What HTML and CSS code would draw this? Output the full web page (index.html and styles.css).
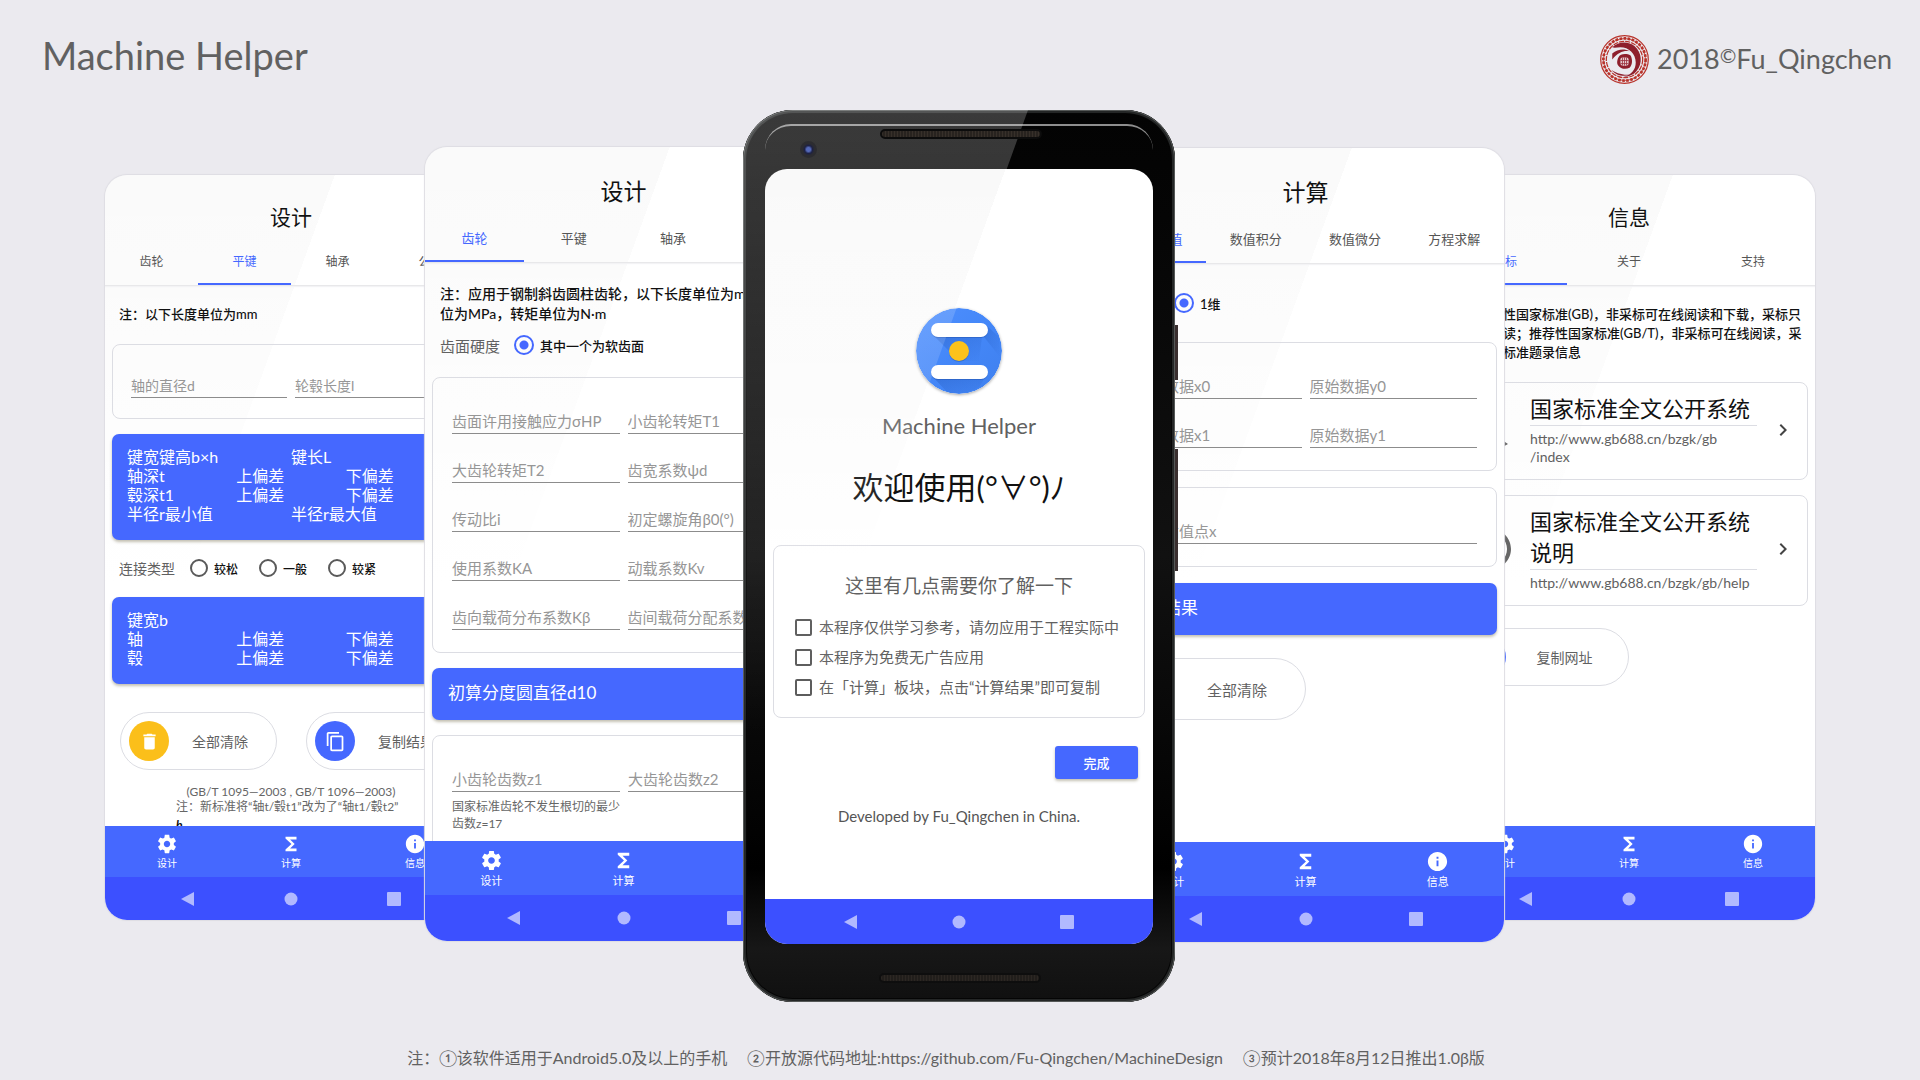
FILE: index.html
```html
<!DOCTYPE html>
<html lang="zh-CN">
<head>
<meta charset="utf-8">
<meta name="viewport" content="width=device-width, initial-scale=1">
<title>Machine Helper</title>
<link rel="stylesheet" href="styles.css">
</head>
<body>
<svg class="sprite" aria-hidden="true">
  <symbol id="gear" viewBox="0 0 24 24"><path d="M19.43 12.98c.04-.32.07-.64.07-.98s-.03-.66-.07-.98l2.11-1.65c.19-.15.24-.42.12-.64l-2-3.46c-.12-.22-.39-.3-.61-.22l-2.49 1c-.52-.4-1.08-.73-1.69-.98l-.38-2.65C14.46 2.18 14.25 2 14 2h-4c-.25 0-.46.18-.49.42l-.38 2.65c-.61.25-1.17.59-1.69.98l-2.49-1c-.23-.09-.49 0-.61.22l-2 3.46c-.13.22-.07.49.12.64l2.11 1.65c-.04.32-.07.65-.07.98s.03.66.07.98l-2.11 1.65c-.19.15-.24.42-.12.64l2 3.46c.12.22.39.3.61.22l2.49-1c.52.4 1.08.73 1.69.98l.38 2.65c.03.24.24.42.49.42h4c.25 0 .46-.18.49-.42l.38-2.65c.61-.25 1.17-.59 1.69-.98l2.49 1c.23.09.49 0 .61-.22l2-3.46c.12-.22.07-.49-.12-.64l-2.11-1.65zM12 15.5c-1.93 0-3.5-1.57-3.5-3.5s1.57-3.5 3.5-3.5 3.5 1.57 3.5 3.5-1.57 3.5-3.5 3.5z"/></symbol>
  <symbol id="sigma" viewBox="0 0 24 24"><path d="M18 4H6v2l6.5 6L6 18v2h12v-3h-7l5-5-5-5h7z"/></symbol>
  <symbol id="info" viewBox="0 0 24 24"><path d="M12 2C6.48 2 2 6.48 2 12s4.48 10 10 10 10-4.48 10-10S17.52 2 12 2zm1 15h-2v-6h2v6zm0-8h-2V7h2v2z"/></symbol>
  <symbol id="trash" viewBox="0 0 24 24"><path d="M6 19c0 1.1.9 2 2 2h8c1.1 0 2-.9 2-2V7H6v12zM19 4h-3.5l-1-1h-5l-1 1H5v2h14V4z"/></symbol>
  <symbol id="copy" viewBox="0 0 24 24"><path d="M16 1H4c-1.1 0-2 .9-2 2v14h2V3h12V1zm3 4H8c-1.1 0-2 .9-2 2v14c0 1.1.9 2 2 2h11c1.1 0 2-.9 2-2V7c0-1.1-.9-2-2-2zm0 16H8V7h11v14z"/></symbol>
  <symbol id="chevron" viewBox="0 0 24 24"><path d="M10 6L8.590 7.410 13.170 12l-4.580 4.590L10 18l6-6z"/></symbol>
  <symbol id="ring" viewBox="0 0 24 24"><path d="M11 18h2v-2h-2v2zm1-16C6.480 2 2 6.480 2 12s4.480 10 10 10 10-4.480 10-10S17.520 2 12 2zm0 18c-4.410 0-8-3.590-8-8s3.590-8 8-8 8 3.590 8 8-3.590 8-8 8zm0-14c-2.210 0-4 1.790-4 4h2c0-1.100.9-2 2-2s2 .9 2 2c0 2-3 1.750-3 5h2c0-2.250 3-2.500 3-5 0-2.210-1.790-4-4-4z"/></symbol>
  <symbol id="goto" viewBox="0 0 24 24"><path d="M3 4h14v9h-2V6H5v12h8v2H3zM16 16v2h-4v2h4v1.500l4.500-2.500-4.500-3z"/></symbol>
  <symbol id="back" viewBox="0 0 14 14"><path d="M13 0v14L0 7z"/></symbol>
  <symbol id="home" viewBox="0 0 14 14"><circle cx="7" cy="7" r="6.500"/></symbol>
  <symbol id="recent" viewBox="0 0 14 14"><rect width="14" height="14" rx="1"/></symbol>
</svg>

<header class="page-header">
  <h1 class="brand">Machine Helper</h1>
  <p class="author">
    <svg class="seal" viewBox="0 0 48 48" aria-hidden="true">
      <circle cx="24" cy="24" r="23.300" fill="none" stroke="#b8322a" stroke-width="1.200"/>
      <circle cx="24" cy="24" r="20.700" fill="none" stroke="#b8322a" stroke-width="2.600" stroke-dasharray="2.600 1.400"/>
      <circle cx="24" cy="24" r="20.500" fill="none" stroke="#b8322a" stroke-width=".8"/>
      <circle cx="24" cy="24" r="17.800" fill="none" stroke="#b8322a" stroke-width="1.200" stroke-dasharray="5 1"/>
      <path d="M12 12C18 6 28 6 34 11c7 6 8 17 2 24-3 4-8 6-13 6 8-2 12-7 12-14 0-9-7-15-15-15-3 0-6 1-8 0z" fill="#8e1f2c"/>
      <path d="M11 34c5 6 12 7 18 5-7 0-12-1-18-5zM12 18c5-4 12-5 17-2-6-1-11 1-17 8z" fill="#8e1f2c"/>
      <path d="M18 22c2-4 8-4 12-2 2 4 2 9-1 12-4 2-9 1-11-2-2-2-1-6 0-8z" fill="#8e1f2c"/>
      <rect x="20" y="22" width="8" height="8" rx="2" fill="#e6cfd2"/>
      <path d="M22 22v8M24 22v8M26 22v8M20 25h8M20 28h8" stroke="#9c3440" stroke-width=".8"/>
    </svg>
    <span>2018<span class="copyright">©</span>Fu_Qingchen</span>
  </p>
</header>

<main class="stage">
  <section class="screen screen--small" aria-label="平键设计">
    <h2 class="screen-title">设计</h2>
    <nav class="tabs">
      <button type="button" class="tab">齿轮</button>
      <button type="button" class="tab tab--active">平键</button>
      <button type="button" class="tab">轴承</button>
      <button type="button" class="tab">公差</button>
    </nav>
    <div class="content">
      <p class="note">注：以下长度单位为mm</p>
      <div class="card fields">
        <input class="field" aria-label="轴的直径d" placeholder="轴的直径d">
        <input class="field" aria-label="轮毂长度l" placeholder="轮毂长度l">
      </div>
      <div class="result">
        <div class="halves"><span>键宽键高b×h</span><span>键长L</span></div>
        <div class="thirds"><span>轴深t</span><span>上偏差</span><span>下偏差</span></div>
        <div class="thirds"><span>毂深t1</span><span>上偏差</span><span>下偏差</span></div>
        <div class="halves"><span>半径r最小值</span><span>半径r最大值</span></div>
      </div>
      <div class="choices choices--spread" role="radiogroup" aria-label="连接类型">
        <span class="choices-label">连接类型</span>
        <label class="choice"><input type="radio" name="fit">较松</label>
        <label class="choice"><input type="radio" name="fit">一般</label>
        <label class="choice"><input type="radio" name="fit">较紧</label>
      </div>
      <div class="result">
        <div>键宽b</div>
        <div class="thirds"><span>轴</span><span>上偏差</span><span>下偏差</span></div>
        <div class="thirds"><span>毂</span><span>上偏差</span><span>下偏差</span></div>
      </div>
      <div class="actions actions--pair">
        <button type="button" class="pill"><span class="pill-icon pill-icon--yellow"><svg><use href="#trash"/></svg></span><span class="pill-text">全部清除</span></button>
        <button type="button" class="pill"><span class="pill-icon"><svg><use href="#copy"/></svg></span><span class="pill-text">复制结果</span></button>
      </div>
      <div class="remark">
        <p class="remark-code">(GB/T 1095—2003 , GB/T 1096—2003)</p>
        <p>注：新标准将“轴t/毂t1”改为了“轴t1/毂t2”</p>
        <p class="remark-symbol">b</p>
      </div>
    </div>
    <nav class="bottom-nav">
      <a href="#design"><svg><use href="#gear"/></svg>设计</a>
      <a href="#calc"><svg><use href="#sigma"/></svg>计算</a>
      <a href="#about"><svg><use href="#info"/></svg>信息</a>
    </nav>
    <div class="system-bar"><svg><use href="#back"/></svg><svg><use href="#home"/></svg><svg><use href="#recent"/></svg></div>
  </section>

  <section class="screen screen--gears" aria-label="齿轮设计">
    <h2 class="screen-title">设计</h2>
    <nav class="tabs">
      <button type="button" class="tab tab--active">齿轮</button>
      <button type="button" class="tab">平键</button>
      <button type="button" class="tab">轴承</button>
      <button type="button" class="tab">公差</button>
    </nav>
    <div class="content">
      <p class="note">注：应用于钢制斜齿圆柱齿轮，以下长度单位为mm<br>位为MPa，转矩单位为N·m</p>
      <div class="choices choices--tight" role="radiogroup" aria-label="齿面硬度">
        <span class="choices-label">齿面硬度</span>
        <label class="choice"><input type="radio" name="hardness" checked>其中一个为软齿面</label>
      </div>
      <div class="card fields">
        <input class="field" aria-label="齿面许用接触应力σHP" placeholder="齿面许用接触应力σHP">
        <input class="field" aria-label="小齿轮转矩T1" placeholder="小齿轮转矩T1">
        <input class="field" aria-label="大齿轮转矩T2" placeholder="大齿轮转矩T2">
        <input class="field" aria-label="齿宽系数ψd" placeholder="齿宽系数ψd">
        <input class="field" aria-label="传动比i" placeholder="传动比i">
        <input class="field" aria-label="初定螺旋角β0(°)" placeholder="初定螺旋角β0(°)">
        <input class="field" aria-label="使用系数KA" placeholder="使用系数KA">
        <input class="field" aria-label="动载系数Kv" placeholder="动载系数Kv">
        <input class="field" aria-label="齿向载荷分布系数Kβ" placeholder="齿向载荷分布系数Kβ">
        <input class="field" aria-label="齿间载荷分配系数Kα" placeholder="齿间载荷分配系数Kα">
      </div>
      <div class="result result--single">初算分度圆直径d10</div>
      <div class="card fields">
        <div>
          <input class="field" aria-label="小齿轮齿数z1" placeholder="小齿轮齿数z1">
          <p class="hint">国家标准齿轮不发生根切的最少<br>齿数z=17</p>
        </div>
        <input class="field" aria-label="大齿轮齿数z2" placeholder="大齿轮齿数z2">
      </div>
    </div>
    <nav class="bottom-nav">
      <a href="#design"><svg><use href="#gear"/></svg>设计</a>
      <a href="#calc"><svg><use href="#sigma"/></svg>计算</a>
      <a href="#about"><svg><use href="#info"/></svg>信息</a>
    </nav>
    <div class="system-bar"><svg><use href="#back"/></svg><svg><use href="#home"/></svg><svg><use href="#recent"/></svg></div>
  </section>

  <section class="phone" aria-label="欢迎使用">
    <span class="sheen"></span>
    <span class="camera"></span>
    <span class="speaker"></span>
    <div class="display">
      <div class="welcome">
        <svg class="logo" viewBox="0 0 86 86" aria-hidden="true">
          <defs>
            <linearGradient id="disc" x1="0" y1="0" x2="1" y2="1"><stop offset="0" stop-color="#4f90ff"/><stop offset=".5" stop-color="#4487f8"/><stop offset="1" stop-color="#3f80ee"/></linearGradient>
            <linearGradient id="shade" x1="0" y1="0" x2="1" y2="1"><stop offset="0" stop-color="#1c4fae" stop-opacity=".6"/><stop offset="1" stop-color="#1c4fae" stop-opacity="0"/></linearGradient>
          </defs>
          <circle cx="43" cy="43" r="43" fill="url(#disc)"/>
          <path d="M18 28l17 17 8 8 20 0L66 29z" fill="url(#shade)" opacity=".6"/>
          <path d="M70 17l13 12 1 20-16-20z" fill="url(#shade)" opacity=".5"/>
          <path d="M17 69l14 15c10 3 24 1 33-6l4-7z" fill="url(#shade)" opacity=".6"/>
          <rect x="15" y="16" width="57" height="14" rx="7" fill="#1d4ea8" opacity=".4"/>
          <rect x="15" y="58" width="57" height="14" rx="7" fill="#1d4ea8" opacity=".4"/>
          <rect x="15" y="15" width="57" height="14" rx="7" fill="#fff"/>
          <rect x="15" y="57" width="57" height="14" rx="7" fill="#fff"/>
          <circle cx="43" cy="44" r="10" fill="#1d4ea8" opacity=".4"/>
          <circle cx="43" cy="43" r="10" fill="#fcc21b"/>
        </svg>
        <p class="app-name">Machine Helper</p>
        <h2 class="greeting">欢迎使用(°∀°)ﾉ</h2>
        <form class="card terms">
          <h3>这里有几点需要你了解一下</h3>
          <label><input type="checkbox">本程序仅供学习参考，请勿应用于工程实际中</label>
          <label><input type="checkbox">本程序为免费无广告应用</label>
          <label><input type="checkbox">在「计算」板块，点击“计算结果”即可复制</label>
        </form>
        <button type="button" class="done">完成</button>
        <p class="credit">Developed by Fu_Qingchen in China.</p>
      </div>
      <div class="system-bar"><svg><use href="#back"/></svg><svg><use href="#home"/></svg><svg><use href="#recent"/></svg></div>
    </div>
    <span class="speaker speaker--bottom"></span>
  </section>

  <section class="screen screen--calc" aria-label="计算">
    <h2 class="screen-title">计算</h2>
    <nav class="tabs">
      <button type="button" class="tab tab--active">数据插值</button>
      <button type="button" class="tab">数值积分</button>
      <button type="button" class="tab">数值微分</button>
      <button type="button" class="tab">方程求解</button>
    </nav>
    <div class="content">
      <div class="choices choices--loose" role="radiogroup" aria-label="维数">
        <span class="choices-label">维数</span>
        <label class="choice"><input type="radio" name="dimension" checked>1维</label>
      </div>
      <div class="card fields">
        <input class="field" aria-label="原始数据x0" placeholder="原始数据x0">
        <input class="field" aria-label="原始数据y0" placeholder="原始数据y0">
        <input class="field" aria-label="原始数据x1" placeholder="原始数据x1">
        <input class="field" aria-label="原始数据y1" placeholder="原始数据y1">
      </div>
      <div class="card fields fields--single">
        <input class="field" aria-label="待求插值点x" placeholder="待求插值点x">
      </div>
      <div class="result result--single">计算结果</div>
      <div class="actions">
        <button type="button" class="pill"><span class="pill-icon pill-icon--yellow"><svg><use href="#trash"/></svg></span><span class="pill-text">全部清除</span></button>
      </div>
    </div>
    <nav class="bottom-nav">
      <a href="#design"><svg><use href="#gear"/></svg>设计</a>
      <a href="#calc"><svg><use href="#sigma"/></svg>计算</a>
      <a href="#about"><svg><use href="#info"/></svg>信息</a>
    </nav>
    <div class="system-bar"><svg><use href="#back"/></svg><svg><use href="#home"/></svg><svg><use href="#recent"/></svg></div>
  </section>

  <section class="screen screen--small screen--info" aria-label="信息">
    <h2 class="screen-title">信息</h2>
    <nav class="tabs">
      <button type="button" class="tab tab--active">国标</button>
      <button type="button" class="tab">关于</button>
      <button type="button" class="tab">支持</button>
    </nav>
    <div class="content">
      <p class="note note--wide">注：强制性国家标准(GB)，非采标可在线阅读和下载，采标只<br>能在线阅读；推荐性国家标准(GB/T)，非采标可在线阅读，采<br>标只提供标准题录信息</p>
      <div class="card link-card">
        <svg class="link-icon"><use href="#goto"/></svg>
        <div class="link-body">
          <h3>国家标准全文公开系统</h3>
          <a href="http://www.gb688.cn/bzgk/gb/index">http://www.gb688.cn/bzgk/gb<br>/index</a>
        </div>
        <svg class="chevron"><use href="#chevron"/></svg>
      </div>
      <div class="card link-card">
        <svg class="link-icon"><use href="#ring"/></svg>
        <div class="link-body">
          <h3>国家标准全文公开系统说明</h3>
          <a href="http://www.gb688.cn/bzgk/gb/help">http://www.gb688.cn/bzgk/gb/help</a>
        </div>
        <svg class="chevron"><use href="#chevron"/></svg>
      </div>
      <div class="actions">
        <button type="button" class="pill"><span class="pill-icon"><svg><use href="#copy"/></svg></span><span class="pill-text">复制网址</span></button>
      </div>
    </div>
    <nav class="bottom-nav">
      <a href="#design"><svg><use href="#gear"/></svg>设计</a>
      <a href="#calc"><svg><use href="#sigma"/></svg>计算</a>
      <a href="#about"><svg><use href="#info"/></svg>信息</a>
    </nav>
    <div class="system-bar"><svg><use href="#back"/></svg><svg><use href="#home"/></svg><svg><use href="#recent"/></svg></div>
  </section>
</main>

<footer class="page-footer">
  <span>注：①该软件适用于Android5.0及以上的手机</span>
  <span>②开放源代码地址:https://github.com/Fu-Qingchen/MachineDesign</span>
  <span>③预计2018年8月12日推出1.0β版</span>
</footer>
</body>
</html>
```
FILE: styles.css
```css
:root {
  --blue: #4568ff;
  --blue-deep: #3c50ff;
  --line: #dcdde3;
  --text: #111;
  --muted: #616161;
}

* { box-sizing: border-box; }

body {
  margin: 0;
  min-height: 100vh;
  display: flex;
  flex-direction: column;
  background: #ebeaef;
  color: var(--text);
  font-family: Lato, "Noto Sans CJK SC", sans-serif;
  overflow-x: hidden;
}

h1, h2, h3, p { margin: 0; font-weight: 400; }
button, input { font: inherit; color: inherit; }
button { border: 0; padding: 0; background: none; cursor: pointer; }
a { color: inherit; text-decoration: none; }
svg { fill: currentColor; flex: none; }
.sprite { position: absolute; width: 0; height: 0; }

/* Page header and footer */
.page-header {
  display: flex;
  justify-content: space-between;
  align-items: center;
  height: 110px;
  padding: 0 28px 0 42px;
  color: var(--muted);
}
.brand { font-size: 38px; line-height: 48px; }
.author { display: flex; align-items: center; gap: 8px; padding-top: 8px; font-size: 27px; line-height: 34px; }
.seal { width: 49px; height: 49px; }
.author > span { padding-bottom: 4px; }
.copyright { font-size: 20px; vertical-align: 6px; }
.page-footer {
  display: flex;
  justify-content: center;
  gap: 20px;
  padding: 44px 28px 10px 0;
  font-size: 16px;
  line-height: 24px;
  color: var(--muted);
}

/* Overlapping row of screens */
.stage { display: flex; justify-content: center; align-items: flex-start; }

.screen {
  --title: 23px;  --title-line: 32px;  --title-top: 28px;
  --tab: 13px;    --tab-line: 20px;    --tab-pad: 21px 0 12px;
  --note: 14px;   --note-line: 20px;
  --field: 15px;  --field-height: 24px;
  --card-pad: 32px 19px 22px;
  --result: 17px; --result-line: 20px; --result-pad: 16px;
  --choice: 13px; --radio: 20px;
  --inset: 16px;
  --pill-width: 184px; --pill-height: 62px; --pill-icon: 43px;
  --nav: 11px;    --nav-height: 54px;  --nav-icon: 23px;
  --system-height: 46px; --system-gap: 96px;
  --sheen: 230px;
  position: relative;
  flex: none;
  display: flex;
  flex-direction: column;
  width: 397px;
  aspect-ratio: 397 / 794;
  overflow: hidden;
  border-radius: 22px;
  box-shadow: 0 0 1px 1px #dedde3;
  background:
    linear-gradient(to bottom, transparent, #fff 55%),
    linear-gradient(110deg, #fafafa var(--sheen), #fff var(--sheen));
  margin-top: 37px;
}
.screen--small {
  --title: 21px;  --title-line: 30px;  --title-top: 27px;
  --tab: 12px;    --tab-line: 18px;    --tab-pad: 21px 0 12px;
  --note: 13px;   --note-line: 19px;
  --field: 14px;  --field-height: 23px;
  --card-pad: 30px 18px 20px;
  --result: 16px; --result-line: 19px; --result-pad: 15px;
  --choice: 12px; --radio: 18px;
  --inset: 14px;
  --pill-width: 172px; --pill-height: 58px; --pill-icon: 40px;
  --nav: 10px;    --nav-height: 51px;  --nav-icon: 22px;
  --system-height: 43px; --system-gap: 89px;
  --sheen: 216px;
  width: 372px;
  aspect-ratio: 372 / 745;
  margin-top: 65px;
}
.screen--gears { margin-left: -52px; z-index: 1; }
.screen--calc { margin-left: -68px; margin-top: 38px; z-index: 1; }
.screen--info { margin-left: -61px; }

.screen-title {
  padding-top: var(--title-top);
  font-size: var(--title);
  line-height: var(--title-line);
  text-align: center;
}
.tabs { display: flex; border-bottom: 1px solid #e8e8ea; box-shadow: 0 1px 1px #f3f3f5; }
.tab {
  flex: 1;
  padding: var(--tab-pad);
  border-bottom: 2px solid transparent;
  font-size: var(--tab);
  line-height: var(--tab-line);
  color: #555;
}
.tab--active { color: var(--blue); border-color: var(--blue); }

.content { flex: 1; min-height: 0; overflow: hidden; padding: 0 7px; }
.note {
  padding: 21px 0 0 8px;
  font-size: var(--note);
  font-weight: 500;
  line-height: var(--note-line);
  white-space: nowrap;
}
.screen--small .note { padding: 19px 0 20px 7px; }
.screen--small .note--wide { padding-left: 1px; }

.card { border: 1px solid var(--line); border-radius: 8px; margin-bottom: 15px; }
.screen--calc .card { margin-bottom: 16px; }
.fields {
  display: grid;
  grid-template-columns: 1fr 1fr;
  align-items: start;
  gap: 25px 8px;
  padding: var(--card-pad);
}
.fields--single { grid-template-columns: 1fr; }
.field {
  display: block;
  width: 100%;
  min-width: 0;
  height: var(--field-height);
  padding: 0 0 2px;
  border: 0;
  border-bottom: 1px solid #8c8c8c;
  border-radius: 0;
  background: none;
  font-size: var(--field);
  outline: 0;
}
.field::placeholder { color: #969696; opacity: 1; }
.hint { margin-top: 6px; font-size: 12px; line-height: 17px; color: #666; white-space: nowrap; }

.result {
  padding: 13px var(--result-pad) 17px;
  border-radius: 7px;
  background: var(--blue);
  color: #fff;
  font-size: var(--result);
  line-height: var(--result-line);
  box-shadow: 0 2px 3px rgba(60, 50, 0, .3);
}
.result--single { padding-block: 15px 17px; margin-bottom: 15px; }
.halves { display: grid; grid-template-columns: 1fr 1fr; }
.thirds { display: grid; grid-template-columns: 1fr 1fr 1fr; }

.choices { display: flex; align-items: center; height: 24px; padding-left: 8px; gap: 14px; }
.choices--tight { margin: 9px 0 20px; }
.choices--loose { margin: 27px 0; }
.choices--spread { height: 22px; margin: 17px 0 18px; padding-left: 7px; gap: 21px; }
.choices--spread .choices-label { margin-right: -6px; }
.choices--loose .choices-label { min-width: 38px; }
.choices-label { font-size: var(--field); color: var(--muted); }
.choice { display: flex; align-items: center; gap: 6px; font-size: var(--choice); font-weight: 500; }
.choice input {
  appearance: none;
  width: var(--radio);
  height: var(--radio);
  margin: 0;
  border: 2px solid #5a5a5a;
  border-radius: 50%;
}
.choice input:checked {
  border-color: var(--blue);
  background: radial-gradient(circle, var(--blue) 0 4px, transparent 5px);
}

.actions { padding: 8px 0 0 8px; }
.actions--pair { display: grid; grid-template-columns: 157px 157px; gap: 29px; padding-top: 28px; }
.actions--pair .pill { width: auto; }
.pill {
  display: flex;
  align-items: center;
  width: var(--pill-width);
  height: var(--pill-height);
  padding: 0 5px 0 8px;
  border: 1px solid var(--line);
  border-radius: 31px;
  font-size: var(--field);
  color: var(--muted);
}
.pill-icon {
  display: grid;
  place-items: center;
  width: var(--pill-icon);
  height: var(--pill-icon);
  border-radius: 50%;
  background: var(--blue);
  color: #fff;
}
.pill-icon--yellow { background: #fbbf1a; }
.pill-icon svg { width: 21px; height: 21px; }
.pill-text { flex: 1; text-align: center; white-space: nowrap; }

.remark { width: 230px; margin: 14px auto 0; font-size: 12px; line-height: 15px; color: #666; white-space: nowrap; }
.remark-code { text-align: center; }
.remark-symbol { padding-top: 3px; font-style: italic; font-weight: 700; color: #111; }

.link-card { display: flex; align-items: center; padding: 10px 12px 13px 16px; }
.link-icon { width: 48px; height: 48px; color: #666; }
.link-body { width: 227px; margin: 0 auto 0 15px; }
.link-body h3 { padding-bottom: 1px; border-bottom: 1px solid var(--line); font-size: 22px; line-height: 31px; }
.link-body a { display: block; padding-top: 4px; font-size: 14px; line-height: 18px; color: var(--muted); }
.chevron { width: 24px; height: 24px; color: #444; }
.screen--info .actions { padding: 7px 0 0 7px; }

.bottom-nav {
  display: grid;
  grid-template-columns: 1fr 1fr 1fr;
  height: var(--nav-height);
  padding-top: 1px;
  background: var(--blue);
  color: #fff;
  font-size: var(--nav);
  line-height: 15px;
}
.bottom-nav a { display: flex; flex-direction: column; align-items: center; justify-content: center; gap: 1px; }
.bottom-nav svg { width: var(--nav-icon); height: var(--nav-icon); }
.system-bar {
  display: flex;
  align-items: center;
  justify-content: center;
  gap: var(--system-gap);
  height: var(--system-height);
  background: var(--blue-deep);
  color: #b1b9ff;
}
.system-bar svg { width: 14px; height: 14px; }

/* Handset in the middle */
.phone {
  position: relative;
  z-index: 2;
  flex: none;
  display: flex;
  flex-direction: column;
  width: 432px;
  aspect-ratio: 432 / 892;
  margin-left: -79px;
  padding: 59px 22px 58px;
  border-radius: 50px;
  background: linear-gradient(to bottom, #030303, #050505 12%, #111 50%, #000 85%, #171717 94%, #101010);
  box-shadow:
    inset 0 0 0 1px #555857,
    inset 0 0 0 3px #242626,
    inset 0 0 0 4px #050505;
}
.phone::before {
  content: "";
  position: absolute;
  inset: 14px 22px auto;
  height: 24px;
  border-top: 2px solid #8e8e8e;
  border-radius: 28px 28px 0 0;
}
/* volume and power keys on the right edge */
.phone::after {
  content: "";
  position: absolute;
  left: 100%;
  top: 215px;
  width: 3px;
  height: 246px;
  background: linear-gradient(to bottom, #3a2f2f 55px, transparent 55px 124px, #3a2f2f 124px);
}
/* diagonal reflection that fades out down the glass */
.sheen {
  position: absolute;
  inset: 0;
  border-radius: inherit;
  background: linear-gradient(to bottom, rgba(255, 255, 255, .22), rgba(255, 255, 255, .1) 40%, transparent 70%);
  clip-path: polygon(0 0, 285px 0, 0 790px);
}
.camera {
  position: absolute;
  left: 57px;
  top: 31px;
  width: 17px;
  height: 17px;
  border-radius: 50%;
  background: radial-gradient(circle at 50% 50%, #5468b8 0 2px, #1d2144 4px, #2c2c30 6px);
}
.speaker {
  position: absolute;
  left: 137px;
  top: 19px;
  width: 162px;
  height: 10px;
  border: 2px solid #0c0c0c;
  border-radius: 5px;
  background: repeating-linear-gradient(90deg, #37302a 0 1px, #28231f 1px 3px);
}
.speaker--bottom { top: auto; bottom: 19px; left: 136px; opacity: .7; }
.display {
  --system-height: 45px;
  --system-gap: 94px;
  flex: 1;
  display: flex;
  flex-direction: column;
  overflow: hidden;
  border-radius: 22px;
  background:
    linear-gradient(to bottom, transparent, #fff 50%),
    linear-gradient(110deg, #f8f8f8 226px, #fff 226px);
}
.welcome { flex: 1; display: flex; flex-direction: column; align-items: center; padding: 139px 8px 0; }
.logo { width: 86px; height: 86px; border-radius: 50%; box-shadow: 0 1px 3px rgba(0, 0, 0, .35); }
.app-name { margin-top: 17px; font-size: 22px; line-height: 30px; color: var(--muted); }
.greeting { margin-top: 24px; font-size: 31px; line-height: 44px; }
.terms {
  align-self: stretch;
  display: flex;
  flex-direction: column;
  margin: 36px 0 28px;
  padding: 26px 21px 15px;
  color: var(--muted);
}
.terms h3 { margin-bottom: 12px; font-size: 19px; line-height: 28px; text-align: center; }
.terms label { display: flex; align-items: center; gap: 7px; font-size: 15px; line-height: 30px; white-space: nowrap; }
.terms input {
  appearance: none;
  width: 17px;
  height: 17px;
  margin: 0;
  border: 2px solid #5a5a5a;
  border-radius: 2px;
}
.done {
  align-self: flex-end;
  width: 83px;
  height: 33px;
  margin-right: 7px;
  border-radius: 3px;
  background: var(--blue);
  color: #fff;
  font-size: 13px;
  font-weight: 500;
  box-shadow: 0 2px 3px rgba(60, 50, 0, .3);
}
.credit { margin-top: 26px; font-size: 15px; line-height: 22px; color: #555; }
```
